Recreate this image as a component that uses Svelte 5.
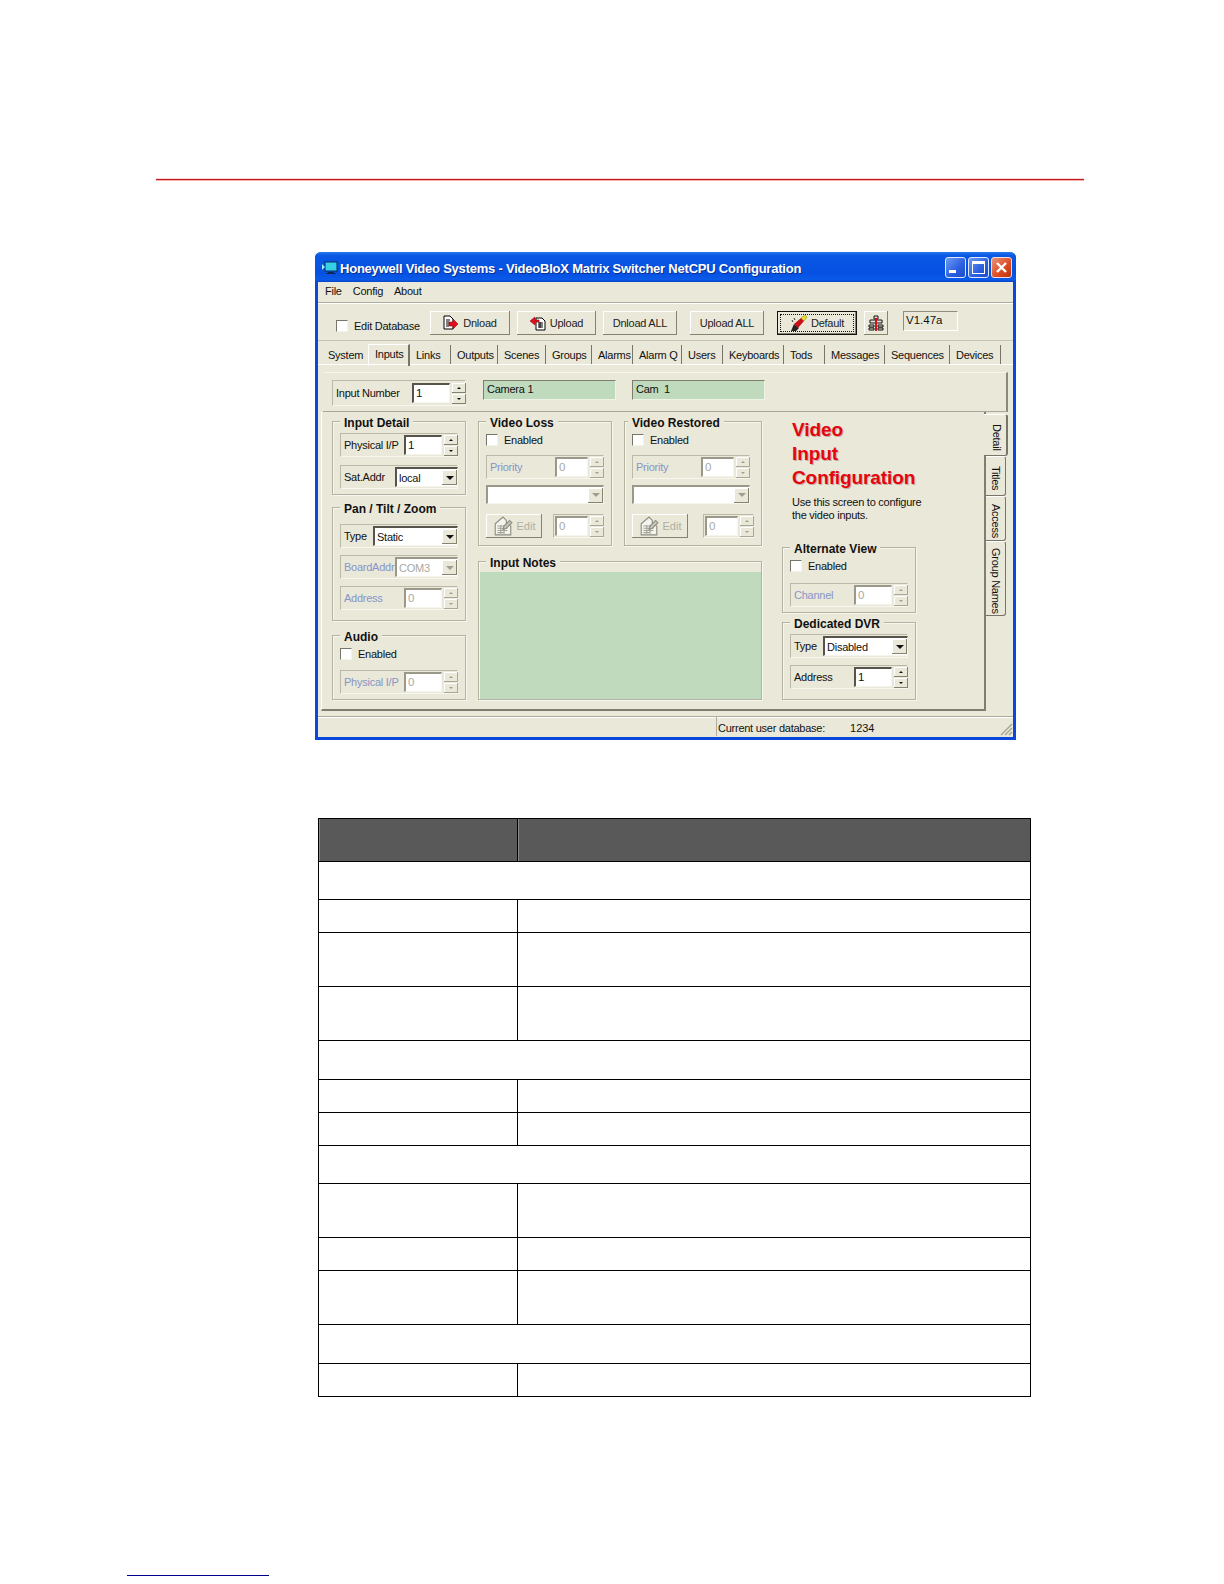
<script>
	// tab strip: label + pixel width, taken from the dialog
	const tabs = [
		['System', 46], ['Inputs', 42], ['Links', 41], ['Outputs', 47], ['Scenes', 48], ['Groups', 46], ['Alarms', 41],
		['Alarm Q', 49], ['Users', 41], ['Keyboards', 61], ['Tods', 41], ['Messages', 60], ['Sequences', 65], ['Devices', 51]
	];

	const sideTabs = ['Detail', 'Titles', 'Access', 'Group Names'];

	// empty table on the manual page below the screenshot
	const rows = [
		'head', 'section', 'single', 'double', 'double',
		'section', 'single', 'single',
		'section', 'double', 'single', 'double',
		'section', 'single'
	];
</script>

{#snippet spin(value, disabled = false, narrow = false)}
	<div class="spin" class:disabled>
		<div class="field" class:narrow>{value}</div>
		<div class="spin-btns">
			<span class="spin-btn up"></span>
			<span class="spin-btn down"></span>
		</div>
	</div>
{/snippet}

{#snippet combo(value, size = 'wide', disabled = false)}
	<div class="combo {size}" class:disabled>
		<span class="combo-val">{value}</span>
		<span class="combo-btn"></span>
	</div>
{/snippet}

{#snippet check(label)}
	<div class="check"><span class="box"></span><span>{label}</span></div>
{/snippet}

{#snippet editIcon()}
	<svg class="ico" viewBox="0 0 18 18" width="20" height="20">
		<path d="M2 7l7-6 3 3v3l4 2v8H2z" fill="#f4f3ec" stroke="#8d8c80" />
		<path d="M4 9h8M4 11h9M4 13h9M4 15h6M7 8v8M10 8v8" stroke="#a5a498" />
		<path d="M10 9l5-5 2 2-5 5-3 1z" fill="#c9c8bb" stroke="#8d8c80" />
	</svg>
{/snippet}

<div class="page">
	<div class="rule"></div>

	<div class="window">
		<div class="titlebar">
			<svg class="app-ico" viewBox="0 0 16 14" width="16" height="14">
				<rect x="3" y="1" width="12" height="9" fill="#35d0e8" stroke="#0b2a5a" />
				<path d="M0 3l3 3-3 3z" fill="#9fe8f5" />
				<path d="M6 11h6v1h2v1H4v-1h2z" fill="#0b2a5a" />
			</svg>
			<span class="title">Honeywell Video Systems - VideoBloX Matrix Switcher NetCPU Configuration</span>
			<div class="win-btns">
				<span class="win-btn"><i class="min"></i></span>
				<span class="win-btn"><i class="max"></i></span>
				<span class="win-btn close">
					<svg viewBox="0 0 21 21" width="21" height="21"><path d="M6 6l9 9M15 6l-9 9" stroke="#fff" stroke-width="2.4" /></svg>
				</span>
			</div>
		</div>

		<div class="menu">
			<span>File</span><span>Config</span><span>About</span>
		</div>

		<div class="toolbar">
			<div class="check tb-check"><span class="box"></span><span>Edit Database</span></div>
			<button class="btn w80">
				<svg viewBox="0 0 16 16" width="16" height="16">
					<path d="M1 1h6l3 3v10H1z" fill="#fff" stroke="#000" />
					<path d="M3 5h4M3 7h3M3 9h3M3 11h3" stroke="#000" />
					<path d="M6 7h4V4l5 5-5 5v-3H6z" fill="#e2101c" stroke="#8c0a10" stroke-width=".6" />
				</svg>
				Dnload
			</button>
			<button class="btn w79 near">
				<svg viewBox="0 0 16 16" width="16" height="16">
					<path d="M6 3h6l3 3v9H6z" fill="#fff" stroke="#000" />
					<path d="M8 8h5M8 10h5M8 12h5M10 7v6" stroke="#000" />
					<path d="M9 5H5V2L0 6l5 4V7h4z" fill="#e2101c" stroke="#8c0a10" stroke-width=".6" />
				</svg>
				Upload
			</button>
			<button class="btn w74 near">Dnload ALL</button>
			<button class="btn w74 far">Upload ALL</button>
			<button class="btn w80 far default">
				<span class="focus">
					<svg viewBox="0 0 18 18" width="18" height="18">
						<path d="M1 17l3-7 5 4-3 3z" fill="#222" />
						<path d="M4 10l7-6 3 3-6 7z" fill="#c8101c" />
						<path d="M11 4l4-3 2 2-3 4z" fill="#e8e020" stroke="#7a7a10" stroke-width=".5" />
						<path d="M2 6l1 2M4 4l1 2" stroke="#333" />
					</svg>
					Default
				</span>
			</button>
			<button class="btn icon-btn">
				<svg viewBox="0 0 16 16" width="16" height="16">
					<path d="M6 1h4v3H6zM2 5h12v3H2zM1 10h5v2H1zM10 10h5v2h-5zM1 13h5v2H1zM10 13h5v2h-5z" fill="#e8e6d6" stroke="#111" />
					<path d="M7 3h2v13H7z" fill="#d8101c" />
				</svg>
			</button>
			<div class="version">V1.47a</div>
		</div>

		<div class="tabs">
			{#each tabs as [label, w]}
				<div class="tab" class:active={label === 'Inputs'} style="width: {w}px">{label}</div>
			{/each}
		</div>

		<div class="sheet">
			<div class="inputbar">
				<div class="row number-row">
					<span>Input Number</span>
					{@render spin('1')}
				</div>
				<div class="name first">Camera 1</div>
				<div class="name">Cam &nbsp;1</div>
			</div>

			<div class="lower">
				<div class="pane">
					<div class="col">
						<div class="group h74">
							<div class="legend tight">Input Detail</div>
							<div class="row"><span>Physical I/P</span>{@render spin('1')}</div>
							<div class="row"><span>Sat.Addr</span>{@render combo('local', 'small')}</div>
						</div>
						<div class="group h114">
							<div class="legend loose">Pan / Tilt / Zoom</div>
							<div class="row"><span>Type</span>{@render combo('Static')}</div>
							<div class="row off"><span>BoardAddr</span>{@render combo('COM3', 'small', true)}</div>
							<div class="row off"><span>Address</span>{@render spin('0', true)}</div>
						</div>
						<div class="group h65 audio">
							<div class="legend">Audio</div>
							{@render check('Enabled')}
							<div class="row off"><span>Physical I/P</span>{@render spin('0', true)}</div>
						</div>
					</div>

					<div class="col mid">
						<div class="pair">
							<div class="group h125">
								<div class="legend">Video Loss</div>
								{@render check('Enabled')}
								<div class="row off"><span>Priority</span>{@render spin('0', true, true)}</div>
								{@render combo('', 'full', true)}
								<div class="edit-row">
									<button class="btn edit" disabled>{@render editIcon()}Edit</button>
									<div class="row off short">{@render spin('0', true, true)}</div>
								</div>
							</div>
							<div class="group h125 restored">
								<div class="legend">Video Restored</div>
								{@render check('Enabled')}
								<div class="row off"><span>Priority</span>{@render spin('0', true, true)}</div>
								{@render combo('', 'full', true)}
								<div class="edit-row">
									<button class="btn edit" disabled>{@render editIcon()}Edit</button>
									<div class="row off short">{@render spin('0', true, true)}</div>
								</div>
							</div>
						</div>
						<div class="group notes">
							<div class="legend">Input Notes</div>
							<div class="notes-area"></div>
						</div>
					</div>

					<div class="col right">
						<div class="heading">Video<br />Input<br />Configuration</div>
						<p class="desc">Use this screen to configure<br />the video inputs.</p>
						<div class="group h66 alt">
							<div class="legend">Alternate View</div>
							{@render check('Enabled')}
							<div class="row off"><span>Channel</span>{@render spin('0', true)}</div>
						</div>
						<div class="group h78 dvr">
							<div class="legend tight">Dedicated DVR</div>
							<div class="row"><span>Type</span>{@render combo('Disabled')}</div>
							<div class="row"><span>Address</span>{@render spin('1')}</div>
						</div>
					</div>
				</div>

				<div class="side-tabs">
					{#each sideTabs as label, i}
						<div class="side-tab t{i}" class:active={i === 0}><span>{label}</span></div>
					{/each}
				</div>
			</div>
		</div>

		<div class="status">
			<div class="status-left"></div>
			<div class="status-right">
				<span>Current user database:</span>
				<span class="user-id">1234</span>
				<svg class="grip" viewBox="0 0 14 14" width="14" height="14">
					<path d="M13 2L2 13M13 6l-7 7M13 10l-3 3" stroke="#a5a392" stroke-width="1.4" />
				</svg>
			</div>
		</div>
	</div>

	<table class="blank">
		<tbody>
			{#each rows as kind}
				<tr class={kind}>
					{#if kind === 'section'}
						<td colspan="2"></td>
					{:else}
						<td class="first-col"></td>
						<td></td>
					{/if}
				</tr>
			{/each}
		</tbody>
	</table>

	<div class="footer-rule"></div>
</div>

<style>
	:global(body) {
		margin: 0;
		background: #fff;
	}

	.page {
		width: 1224px;
		height: 1584px;
		padding-top: 179px;
		box-sizing: border-box;
		overflow: hidden;
		font-family: 'Liberation Sans', Arial, sans-serif;
	}

	.rule {
		width: 928px;
		height: 1px;
		margin-left: 156px;
		background: #bc1a1e;
		box-shadow: 0 1px #f6b0ac, 0 -1px #fbd8d4;
	}

	/* XP style window */
	.window {
		width: 701px;
		height: 488px;
		margin: 72px 0 0 315px;
		box-sizing: border-box;
		border: 3px solid #0a48dc;
		border-top: 0;
		border-radius: 6px 6px 0 0;
		background: #eae8d9;
		color: #111;
		font-size: 11px;
		letter-spacing: -0.25px;
	}

	.titlebar {
		display: flex;
		align-items: center;
		height: 30px;
		margin: 0 -3px;
		padding: 2px 4px 0 7px;
		box-sizing: border-box;
		border-radius: 6px 6px 0 0;
		background: linear-gradient(#2a78ee 0, #0a58e4 12%, #0650e2 70%, #0a5ae8 92%, #0746c8 100%);
	}

	.app-ico {
		flex: none;
		margin-right: 2px;
	}

	.title {
		color: #fff;
		font-size: 13px;
		font-weight: bold;
		letter-spacing: -0.22px;
		text-shadow: 1px 1px #0a2f90;
		white-space: nowrap;
	}

	.win-btns {
		display: flex;
		gap: 2px;
		margin-left: auto;
		margin-top: -1px;
	}

	.win-btn {
		display: block;
		position: relative;
		width: 21px;
		height: 21px;
		box-sizing: border-box;
		border: 1px solid #dfe8fb;
		border-radius: 3px;
		background: linear-gradient(135deg, #6d9bf2, #2a5fe0 60%, #1f4cc8);
	}

	.win-btn.close {
		border-color: #f3ddd4;
		background: linear-gradient(135deg, #e8947a, #dc4a22 60%, #b9320f);
	}

	.win-btn.close svg {
		display: block;
		margin: -1px;
	}

	.min {
		display: block;
		width: 7px;
		height: 3px;
		margin: 12px 0 0 3px;
		background: #fff;
	}

	.max {
		display: block;
		width: 11px;
		height: 9px;
		margin: 3px 0 0 3px;
		border: 1px solid #fff;
		border-top-width: 3px;
	}

	.menu {
		display: flex;
		gap: 11px;
		align-items: center;
		height: 20px;
		padding: 0 0 2px 7px;
		box-sizing: border-box;
	}

	.toolbar {
		display: flex;
		align-items: center;
		height: 39px;
		box-sizing: border-box;
		padding-left: 18px;
		border-top: 1px solid #aeac9c;
		border-bottom: 1px solid #c6c4b4;
		box-shadow: inset 0 1px #fff;
	}

	.tb-check {
		width: 94px;
		margin: 8px 0 0 0;
		flex: none;
		box-sizing: border-box;
		white-space: nowrap;
	}

	.btn {
		display: flex;
		align-items: center;
		justify-content: center;
		gap: 4px;
		flex: none;
		height: 24px;
		padding: 0;
		box-sizing: border-box;
		border: 0;
		background: #eae8d9;
		color: #222;
		font: inherit;
		letter-spacing: inherit;
		box-shadow: inset -1px -1px #85836f, inset 1px 1px #fff;
	}

	.toolbar .btn {
		margin-top: 2px;
	}

	.w80 { width: 80px; }
	.w79 { width: 79px; }
	.w74 { width: 74px; }
	.near { margin-left: 7px; }
	.far { margin-left: 13px; }

	.default {
		border: 1px solid #111;
		box-shadow: inset -1px -1px #85836f;
	}

	.focus {
		display: flex;
		align-items: center;
		justify-content: center;
		gap: 3px;
		width: 72px;
		height: 16px;
		border: 1px dotted #111;
	}

	.icon-btn {
		width: 24px;
		margin-left: 7px;
	}

	.version {
		width: 55px;
		height: 20px;
		margin: -2px 0 0 15px;
		padding: 2px 0 0 2px;
		box-sizing: border-box;
		border: 1px solid;
		border-color: #908e7e #fff #fff #908e7e;
		font-size: 11.5px;
		letter-spacing: 0;
	}

	.tabs {
		display: flex;
		align-items: flex-end;
		height: 23px;
		padding-left: 4px;
	}

	.tab {
		height: 19px;
		padding: 4px 0 0 6px;
		box-sizing: border-box;
		border-right: 1px solid #77756a;
		white-space: nowrap;
	}

	.tab:first-child {
		border-right: 0;
	}

	.tab.active {
		height: 22px;
		padding-top: 3px;
		margin-bottom: -2px;
		border-top: 1px solid #fff;
		border-left: 1px solid #fff;
		border-right: 2px solid #77756a;
	}

	.sheet {
		padding-top: 8px;
		border-top: 1px solid #fff;
	}

	.inputbar {
		display: flex;
		align-items: flex-start;
		height: 40px;
		margin: -1px 5px 0 5px;
		padding: 7px 0 0 9px;
		box-sizing: border-box;
		border-top: 1px solid #f6f5ec;
		border-right: 2px solid #8b897a;
		border-bottom: 1px solid #a9a797;
	}

	.inputbar .number-row {
		width: 134px;
		height: 26px;
		flex: none;
	}

	.name {
		width: 133px;
		height: 20px;
		margin: 0 0 0 16px;
		padding: 2px 0 0 3px;
		box-sizing: border-box;
		border: 1px solid;
		border-color: #7d7f6c #eef3e6 #eef3e6 #7d7f6c;
		background: #bfdabd;
	}

	.name.first {
		margin-left: 17px;
	}

	.lower {
		display: flex;
		height: 299px;
		margin-left: 3px;
	}

	.pane {
		display: flex;
		width: 665px;
		box-sizing: border-box;
		padding: 9px 0 0 10px;
		border-left: 1px solid #fff;
		border-right: 2px solid #807e70;
		border-bottom: 2px solid #807e70;
	}

	.col {
		display: flex;
		flex-direction: column;
		gap: 12px;
		width: 134px;
		flex: none;
	}

	.mid {
		width: 284px;
		margin-left: 12px;
		gap: 15px;
	}

	.pair {
		display: flex;
		gap: 12px;
	}

	.right {
		margin-left: 20px;
		gap: 0;
	}

	.group {
		display: flex;
		flex-direction: column;
		gap: 7px;
		width: 134px;
		padding: 0 7px;
		box-sizing: border-box;
		flex: none;
		border: 1px solid #b4b2a1;
		box-shadow: 1px 1px #f8f7ef, inset 1px 1px #f8f7ef;
	}

	.h74 { height: 74px; gap: 8px; }
	.h114 { height: 114px; }
	.h65 { height: 65px; }
	.h125 { height: 125px; }
	.h66 { height: 66px; }
	.h78 { height: 78px; }

	.audio { margin-top: 2px; }

	.legend {
		width: fit-content;
		height: 14px;
		margin: -6px 0 -3px 0;
		padding: 0 4px;
		background: #eae8d9;
		font-size: 12px;
		font-weight: bold;
		letter-spacing: 0;
		line-height: 14px;
		white-space: nowrap;
	}

	.legend.tight { margin-bottom: -5px; }
	.legend.loose { margin-bottom: 1px; }

	.dvr .legend.tight { margin-bottom: -4px; }

	.restored {
		width: 138px;
	}

	.restored .legend {
		margin-left: -4px;
	}

	.notes .legend {
		margin-left: 7px;
	}

	.row {
		display: flex;
		align-items: center;
		justify-content: space-between;
		flex: none;
		width: 118px;
		height: 24px;
		padding-left: 3px;
		box-sizing: border-box;
		border: 1px solid;
		border-color: #bab8a7 #f8f7ef #f8f7ef #bab8a7;
		white-space: nowrap;
	}

	.row.off {
		color: #8795c6;
	}

	.row.short {
		width: 51px;
		justify-content: flex-end;
	}

	.edit-row {
		display: flex;
		justify-content: space-between;
		margin-top: 2px;
	}

	.check {
		display: flex;
		align-items: center;
		gap: 6px;
		height: 12px;
		margin-bottom: 2px;
	}

	.tb-check {
		margin-bottom: 0;
	}

	.audio .check {
		margin-bottom: 3px;
	}

	.alt .check {
		margin-bottom: 4px;
	}

	.box {
		display: block;
		width: 12px;
		height: 12px;
		flex: none;
		box-sizing: border-box;
		border: 1px solid;
		border-color: #77756a #f4f3ea #f4f3ea #77756a;
		background: #fff;
	}

	.spin {
		display: flex;
		align-items: center;
		gap: 2px;
		margin-right: -1px;
		flex: none;
	}

	.field {
		width: 38px;
		height: 20px;
		padding: 1px 0 0 2px;
		box-sizing: border-box;
		border: 1px solid;
		border-color: #55534a #f6f5ec #f6f5ec #55534a;
		border-width: 2px 1px 1px 2px;
		background: #fff;
		color: #111;
		font-size: 11.5px;
		line-height: 14px;
		letter-spacing: 0;
	}

	.field.narrow {
		width: 33px;
	}

	.spin-btns {
		display: flex;
		flex-direction: column;
		gap: 1px;
	}

	.spin-btn {
		display: flex;
		align-items: center;
		justify-content: center;
		width: 14px;
		height: 10px;
		background: #eae8d9;
		box-shadow: inset -1px -1px #85836f, inset 1px 1px #fff;
	}

	.spin-btn::after {
		content: '';
		border-left: 2px solid transparent;
		border-right: 2px solid transparent;
	}

	.up::after { border-bottom: 2px solid #111; }
	.down::after { border-top: 2px solid #111; }

	.spin.disabled .field {
		border-color: #9a9888 #f6f5ec #f6f5ec #9a9888;
		color: #a9a99f;
	}

	.spin.disabled .spin-btn {
		box-shadow: inset -1px -1px #a9a797, inset 1px 1px #fff;
	}

	.spin.disabled .up::after { border-bottom-color: #a09e90; }
	.spin.disabled .down::after { border-top-color: #a09e90; }

	.combo {
		display: flex;
		align-items: center;
		justify-content: space-between;
		height: 20px;
		margin-right: -1px;
		flex: none;
		box-sizing: border-box;
		border: 1px solid;
		border-color: #55534a #f6f5ec #f6f5ec #55534a;
		border-width: 2px 1px 1px 2px;
		background: #fff;
		color: #111;
	}

	.combo.wide { width: 85px; }
	.combo.small { width: 63px; }

	.combo.full {
		width: 118px;
		margin: -1px 0 1px;
		height: 19px;
	}

	.combo-val {
		padding-left: 2px;
	}

	.combo-btn {
		display: flex;
		align-items: center;
		justify-content: center;
		width: 15px;
		height: 15px;
		background: #eae8d9;
		box-shadow: inset -1px -1px #85836f, inset 1px 1px #fff;
	}

	.combo-btn::after {
		content: '';
		border-left: 4px solid transparent;
		border-right: 4px solid transparent;
		border-top: 4px solid #111;
	}

	.combo.disabled {
		border-color: #9a9888 #f6f5ec #f6f5ec #9a9888;
		color: #a9a99f;
	}

	.combo.disabled .combo-btn::after {
		border-top-color: #a09e90;
	}

	.edit {
		width: 56px;
		color: #b0af9f;
		letter-spacing: 0;
	}

	.notes {
		width: 284px;
		height: 139px;
		padding: 0;
		gap: 0;
	}

	.notes-area {
		flex: 1;
		margin: 5px 0 0 1px;
		background: #bfdabd;
	}

	.heading {
		margin-top: -3px;
		padding-left: 10px;
		color: #e4060f;
		font-size: 19px;
		font-weight: bold;
		line-height: 24px;
		letter-spacing: -0.1px;
		text-shadow: 1px 1px #c9a9a0;
		white-space: nowrap;
	}

	.desc {
		margin: 6px 0 25px;
		padding-left: 10px;
		line-height: 13px;
		white-space: nowrap;
	}

	.dvr {
		margin-top: 9px;
	}

	.side-tabs {
		display: flex;
		flex-direction: column;
		width: 22px;
		padding-top: 2px;
	}

	.side-tab {
		display: flex;
		justify-content: center;
		width: 20px;
		box-sizing: border-box;
		padding: 4px 3px 0 0;
		border: 1px solid #77756a;
		border-left: 0;
		border-top-color: #fff;
		border-radius: 0 3px 3px 0;
		writing-mode: vertical-rl;
		white-space: nowrap;
	}

	.t0 { height: 42px; }
	.t1 { height: 40px; }
	.t2 { height: 45px; }
	.t3 { height: 75px; }

	.side-tab.active {
		width: 24px;
		margin-left: -2px;
		background: #eae8d9;
		border-right-width: 2px;
	}

	.status {
		display: flex;
		height: 20px;
		margin-top: 5px;
		border-top: 1px solid #aeac9c;
		box-shadow: inset 0 1px #fff;
		box-sizing: border-box;
	}

	.status-left {
		width: 398px;
		border-right: 1px solid #aeac9c;
	}

	.status-right {
		display: flex;
		flex: 1;
		align-items: center;
		padding: 2px 0 0 1px;
	}

	.user-id {
		margin-left: 25px;
		letter-spacing: 0;
	}

	.grip {
		margin-left: auto;
		align-self: flex-end;
	}

	/* empty spec table */
	.blank {
		width: 713px;
		margin: 78px 0 0 318px;
		border-collapse: collapse;
		table-layout: fixed;
	}

	.blank td {
		padding: 0;
		border: 1px solid #000;
	}

	.first-col {
		width: 198px;
	}

	.head td {
		background: #595959;
		box-shadow: inset 1px 0 #8a8a8a;
	}

	.head { height: 43px; }
	.section { height: 38.2px; }
	.single { height: 33.1px; }
	.double { height: 54.1px; }

	.footer-rule {
		width: 142px;
		height: 1px;
		margin: 178px 0 0 127px;
		background: #00008c;
	}
</style>
